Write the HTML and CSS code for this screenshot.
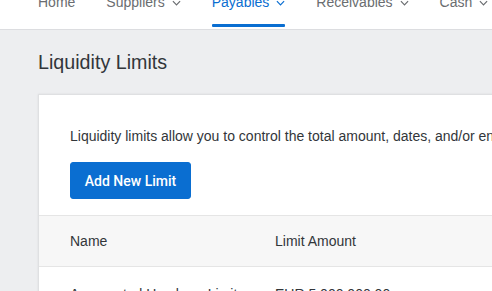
FILE: index.html
```html
<!DOCTYPE html>
<html>
<head>
<meta charset="utf-8">
<link rel="stylesheet" href="styles.css">
</head>
<body>
<nav class="topnav">
  <div class="nav-item">Home</div>
  <div class="nav-item">Suppliers <svg class="chev" viewBox="0 0 10 6"><path d="M1 1l4 4 4-4"/></svg></div>
  <div class="nav-item active">Payables <svg class="chev" viewBox="0 0 10 6"><path d="M1 1l4 4 4-4"/></svg></div>
  <div class="nav-item">Receivables <svg class="chev" viewBox="0 0 10 6"><path d="M1 1l4 4 4-4"/></svg></div>
  <div class="nav-item">Cash <svg class="chev" viewBox="0 0 10 6"><path d="M1 1l4 4 4-4"/></svg></div>
</nav>
<main class="page">
  <h1 class="title">Liquidity Limits</h1>
  <section class="card">
    <p class="intro">Liquidity limits allow you to control the total amount, dates, and/or entities for your payments.</p>
    <button class="btn">Add New Limit</button>
    <div class="table">
      <div class="thead">
        <div class="col-name">Name</div>
        <div class="col-amt">Limit Amount</div>
      </div>
      <div class="trow">
        <div class="col-name">Aggregated Hamburg Limit</div>
        <div class="col-amt">EUR 5,000,000.00</div>
      </div>
    </div>
  </section>
</main>
</body>
</html>
```
FILE: styles.css
```css
html, body { margin: 0; padding: 0; }
body {
  width: 492px;
  height: 291px;
  overflow: hidden;
  background: #edeef0;
  font-family: "Liberation Sans", Arial, sans-serif;
  color: #32363a;
}
.topnav {
  display: flex;
  height: 29px;
  background: #fff;
  border-bottom: 1px solid #dcdde0;
  padding-left: 38px;
  overflow: hidden;
}
.nav-item {
  position: relative;
  font-size: 14px;
  line-height: 14px;
  margin-top: -5px;
  color: #6a6d70;
  margin-right: 31px;
  display: flex;
  align-items: flex-start;
  white-space: nowrap;
  height: 33px;
}
.nav-item.active { color: #0a6ed1; }
.nav-item.active::after {
  content: "";
  position: absolute;
  left: 0;
  right: 0;
  bottom: 1px;
  height: 3px;
  border-radius: 1px;
  background: #0a6ed1;
}
.chev {
  width: 9px;
  height: 6px;
  margin-left: 7px;
  margin-top: 5px;
  fill: none;
  stroke: currentColor;
  stroke-width: 1.3;
}
.page {
  padding-left: 38px;
}
.title {
  margin: 0;
  padding-top: 20px;
  font-size: 19.7px;
  font-weight: normal;
  line-height: 24px;
  color: #32363a;
  height: 44px;
}
.card {
  background: #fff;
  border-top: 1px solid #dfe0e2;
  border-left: 1px solid #dfe0e2;
  box-shadow: 0 0 2px rgba(0,0,0,0.08);
  width: 600px;
}
.intro {
  margin: 0;
  padding: 32px 0 0 31px;
  font-size: 14px;
  line-height: 18px;
  white-space: nowrap;
  color: #32363a;
}
.btn {
  margin: 17px 0 0 31px;
  width: 121px;
  height: 37px;
  background: #0a6ed1;
  color: #fff;
  border: 1px solid #0a6ed1;
  border-radius: 3px;
  font-family: Roboto, "Liberation Sans", Arial, sans-serif;
  font-size: 14px;
  font-weight: 500;
  display: block;
  padding: 0;
}
.table { margin-top: 16px; }
.thead, .trow {
  display: flex;
  padding-left: 31px;
  font-size: 14px;
}
.thead {
  height: 50px;
  align-items: center;
  background: #f7f7f7;
  border-top: 1px solid #e5e5e5;
  border-bottom: 1px solid #e5e5e5;
}
.trow {
  padding-top: 19px;
}
.col-name { width: 205px; }
```
